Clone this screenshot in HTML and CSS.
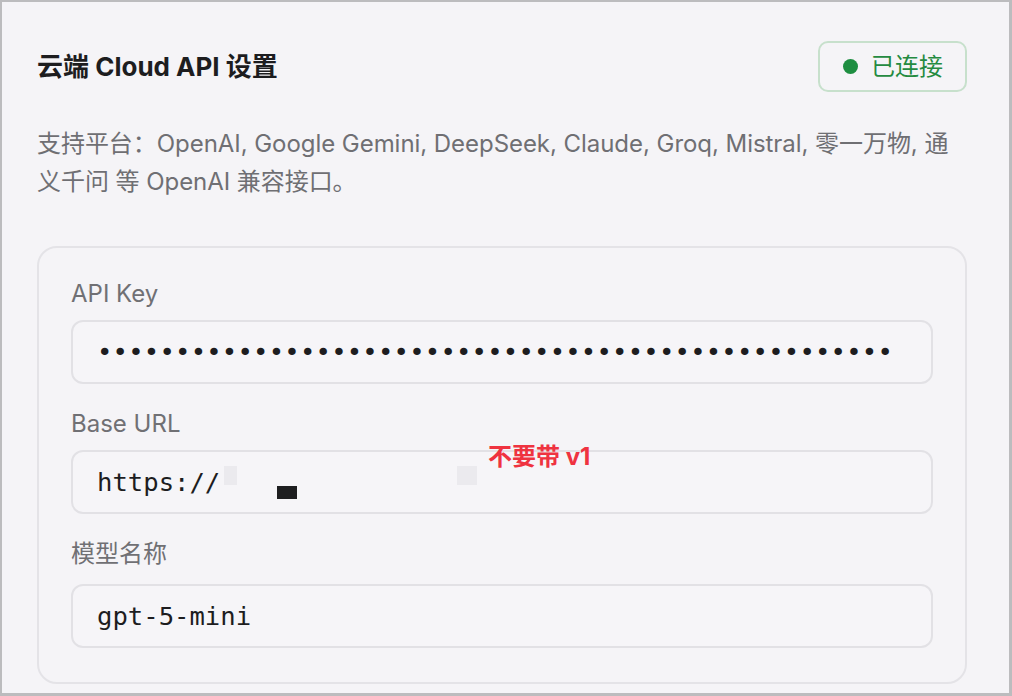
FILE: index.html
```html
<!DOCTYPE html>
<html lang="zh-CN">
<head>
<meta charset="utf-8">
<title>云端 Cloud API 设置</title>
<link rel="stylesheet" href="styles.css">
</head>
<body>
<div class="frame">
  <div class="header">
    <h1 class="title">云端 Cloud API 设置</h1>
    <div class="badge"><span class="dot"></span><span class="badge-text">已连接</span></div>
  </div>
  <p class="desc">支持平台：OpenAI, Google Gemini, DeepSeek, Claude, Groq, Mistral, 零一万物, 通义千问 等 OpenAI 兼容接口。</p>
  <div class="card">
    <div class="field">
      <div class="label">API Key</div>
      <div class="input mono dots"><span>•••••••••••••••••••••••••••••••••••••••••••••••••••</span></div>
    </div>
    <div class="field">
      <div class="label">Base URL</div>
      <div class="input mono"><span>https://</span><span class="blur blur-a"></span><span class="blur blur-b"></span><span class="cursor"></span><span class="note">不要带 v1</span></div>
    </div>
    <div class="field field-cjk">
      <div class="label">模型名称</div>
      <div class="input mono"><span>gpt-5-mini</span></div>
    </div>
  </div>
</div>
</body>
</html>
```

FILE: styles.css
```css
* { box-sizing: border-box; }

html, body {
  margin: 0;
  padding: 0;
  background: #ffffff;
}

body {
  font-family: "Inter", "Noto Sans CJK SC", sans-serif;
}

.frame {
  width: 1012px;
  height: 696px;
  border: 2px solid #bcbcbe;
  border-right-width: 3px;
  border-bottom-width: 3px;
  background: #f5f4f7;
  padding: 39px 42px 0 35px;
  overflow: hidden;
}

.header {
  display: flex;
  justify-content: space-between;
  align-items: center;
  height: 51px;
}

.title {
  margin: 0;
  font-size: 26px;
  font-weight: 650;
  color: #1d1d1f;
  line-height: 36px;
}

.badge {
  display: flex;
  align-items: center;
  gap: 13px;
  height: 51px;
  padding: 0 22px 0 23px;
  border: 2px solid #c7e0cc;
  border-radius: 10px;
}

.dot {
  width: 15px;
  height: 15px;
  border-radius: 50%;
  background: #1e8e41;
}

.badge-text {
  font-size: 24px;
  color: #258b41;
  line-height: 30px;
}

.desc {
  margin: 33px 0 0;
  font-size: 24px;
  line-height: 37.5px;
  color: #6f6f73;
  letter-spacing: -0.05px;
}

.card {
  margin-top: 46px;
  border: 2px solid #e4e3e7;
  border-radius: 20px;
  padding: 28px 32px 34px;
  display: flex;
  flex-direction: column;
  gap: 22px;
}

.label {
  font-size: 24px;
  line-height: 36px;
  color: #707074;
  margin-bottom: 8px;
}

.field-cjk .label {
  margin-bottom: 12px;
}

.input {
  position: relative;
  height: 64px;
  border: 2px solid #e2e1e5;
  border-radius: 12px;
  background: #f6f5f8;
  padding: 0 24px;
  display: flex;
  align-items: center;
  white-space: nowrap;
}

.mono {
  font-family: "DejaVu Sans Mono", monospace;
  font-size: 25.6px;
  color: #1d1d1f;
}

.dots {
  letter-spacing: 0.2px;
}

.blur {
  position: absolute;
  top: 14px;
  height: 19px;
  background: #ebeaee;
}

.blur-a { left: 151px; width: 13px; }
.blur-b { left: 384px; width: 20px; }

.cursor {
  position: absolute;
  left: 204px;
  top: 34px;
  width: 20px;
  height: 13px;
  background: #1e1e20;
}

.note {
  position: absolute;
  left: 415px;
  top: -10px;
  font-family: "Inter", "Noto Sans CJK SC", sans-serif;
  font-size: 24px;
  font-weight: 700;
  line-height: 30px;
  color: #ef3340;
}
```
